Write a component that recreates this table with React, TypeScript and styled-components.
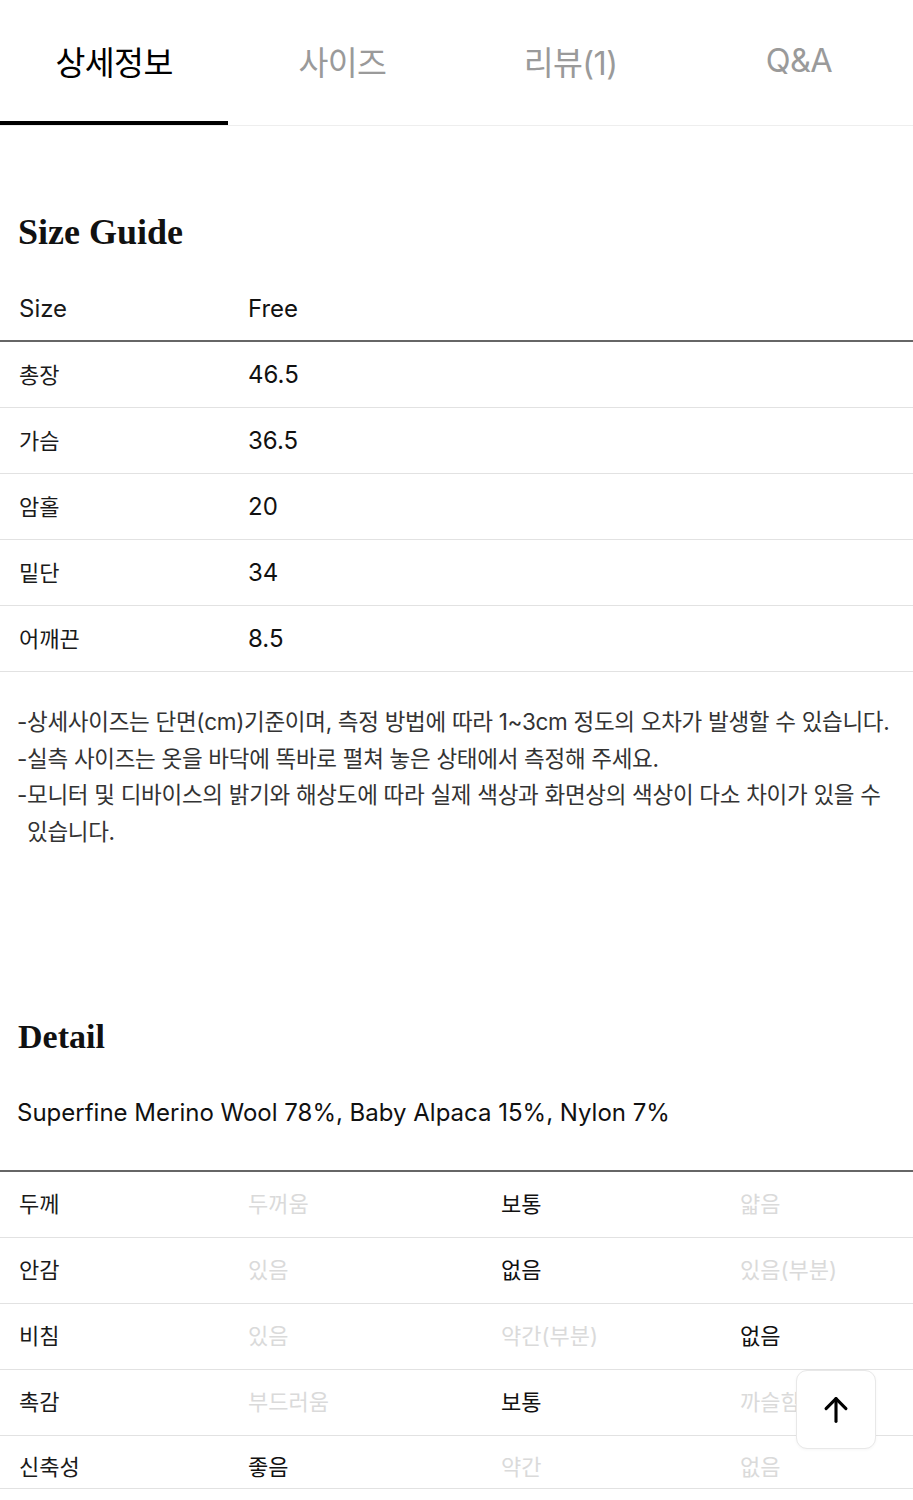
import React from "react";
import styled, { createGlobalStyle } from "styled-components";

const GlobalStyle = createGlobalStyle`
  html, body { margin: 0; padding: 0; background: #ffffff; }
  body {
    font-family: Inter, "Noto Sans CJK KR", "Noto Sans", sans-serif;
    color: #111;
    -webkit-font-smoothing: antialiased;
  }
  * { box-sizing: border-box; }
`;

const Page = styled.div`
  width: 913px;
  position: relative;
  min-height: 1500px;
  overflow: hidden;
`;

const TabBar = styled.nav`
  display: grid;
  grid-template-columns: repeat(4, 1fr);
  border-bottom: 1px solid #eeeeee;
`;

const Tab = styled.div<{ $active?: boolean }>`
  height: 125px;
  display: flex;
  align-items: center;
  justify-content: center;
  font-size: 32.5px;
  letter-spacing: -0.6px;
  color: ${(p) => (p.$active ? "#000" : "#9a9a9a")};
  border-bottom: 4px solid ${(p) => (p.$active ? "#000" : "transparent")};
`;

const Heading = styled.h2<{ $top: number; $size: number }>`
  margin: ${(p) => p.$top}px 0 0 0;
  padding-left: 18px;
  font-family: "Liberation Serif", "Times New Roman", serif;
  font-weight: 700;
  font-size: ${(p) => p.$size}px;
  line-height: 40px;
  color: #111;
`;

const Table = styled.div<{ $top: number; $topLine?: boolean }>`
  margin-top: ${(p) => p.$top}px;
  border-top: ${(p) => (p.$topLine ? "2px solid #666" : "none")};
`;

const Row = styled.div<{ $cols: string; $header?: boolean; $short?: boolean }>`
  display: grid;
  grid-template-columns: ${(p) => p.$cols};
  align-items: center;
  height: ${(p) => (p.$short ? 53 : 66)}px;
  padding-top: ${(p) => (p.$short ? 10 : 0)}px;
  border-bottom: ${(p) => (p.$header ? "2px solid #666" : "1px solid #e2e2e2")};
`;

const Label = styled.div<{ $latin?: boolean }>`
  padding-left: 19px;
  padding-bottom: ${(p) => (p.$latin ? 0 : 4)}px;
  color: #1a1a1a;
  font-size: ${(p) => (p.$latin ? 24 : 22)}px;
`;

const Cell = styled.div<{ $on?: boolean; $latin?: boolean }>`
  padding-bottom: ${(p) => (p.$latin ? 0 : 4)}px;
  color: ${(p) => (p.$on ? "#111" : "#dadada")};
  font-size: ${(p) => (p.$latin ? 24 : 22)}px;
`;

const Notes = styled.ul`
  list-style: none;
  margin: 32px 0 0 0;
  padding: 0 8px 0 27px;
  font-size: 22.5px;
  line-height: 36.7px;
  color: #333;
  letter-spacing: -0.3px;
`;

const Note = styled.li`
  text-indent: -10px;
`;

const Material = styled.p`
  margin: 40px 0 0 0;
  padding-left: 17px;
  font-size: 24px;
  line-height: 32px;
  color: #111;
`;

const TopButton = styled.button`
  position: absolute;
  left: 796px;
  top: 1370px;
  width: 80px;
  height: 79px;
  border-radius: 11px;
  background: #fff;
  border: 1px solid #e8e8e8;
  display: flex;
  align-items: center;
  justify-content: center;
  padding: 0;
  box-shadow: 0 1px 3px rgba(0, 0, 0, 0.04);
`;

const sizeCols = "248px 1fr";
const detailCols = "248px 253px 239px 1fr";

const sizeRows: [string, string][] = [
  ["총장", "46.5"],
  ["가슴", "36.5"],
  ["암홀", "20"],
  ["밑단", "34"],
  ["어깨끈", "8.5"],
];

const detailRows: { label: string; opts: string[]; on: number }[] = [
  { label: "두께", opts: ["두꺼움", "보통", "얇음"], on: 1 },
  { label: "안감", opts: ["있음", "없음", "있음(부분)"], on: 1 },
  { label: "비침", opts: ["있음", "약간(부분)", "없음"], on: 2 },
  { label: "촉감", opts: ["부드러움", "보통", "까슬함"], on: 1 },
  { label: "신축성", opts: ["좋음", "약간", "없음"], on: 0 },
];

export default function App() {
  return (
    <Page>
      <GlobalStyle />
      <TabBar>
        <Tab $active>상세정보</Tab>
        <Tab>사이즈</Tab>
        <Tab>리뷰(1)</Tab>
        <Tab>Q&amp;A</Tab>
      </TabBar>

      <Heading $top={86} $size={36}>Size Guide</Heading>
      <Table $top={24}>
        <Row $cols={sizeCols} $header>
          <Label $latin>Size</Label>
          <Cell $on $latin>Free</Cell>
        </Row>
        {sizeRows.map(([k, v]) => (
          <Row key={k} $cols={sizeCols}>
            <Label>{k}</Label>
            <Cell $on $latin>{v}</Cell>
          </Row>
        ))}
      </Table>

      <Notes>
        <Note>-상세사이즈는 단면(cm)기준이며, 측정 방법에 따라 1~3cm 정도의 오차가 발생할 수 있습니다.</Note>
        <Note>-실측 사이즈는 옷을 바닥에 똑바로 펼쳐 놓은 상태에서 측정해 주세요.</Note>
        <Note>-모니터 및 디바이스의 밝기와 해상도에 따라 실제 색상과 화면상의 색상이 다소 차이가 있을 수 있습니다.</Note>
      </Notes>

      <Heading $top={166} $size={34}>Detail</Heading>
      <Material>Superfine Merino Wool 78%, Baby Alpaca 15%, Nylon 7%</Material>
      <Table $top={41} $topLine>
        {detailRows.map((r, i) => (
          <Row key={r.label} $cols={detailCols} $short={i === detailRows.length - 1}>
            <Label>{r.label}</Label>
            {r.opts.map((o, j) => (
              <Cell key={o + j} $on={j === r.on}>
                {o}
              </Cell>
            ))}
          </Row>
        ))}
      </Table>

      <TopButton aria-label="맨 위로">
        <svg width="34" height="34" viewBox="0 0 24 24" fill="none" stroke="#000" strokeWidth="2.2" strokeLinecap="round" strokeLinejoin="round">
          <path d="M12 20V4" />
          <path d="M5 11l7-7 7 7" />
        </svg>
      </TopButton>
    </Page>
  );
}
